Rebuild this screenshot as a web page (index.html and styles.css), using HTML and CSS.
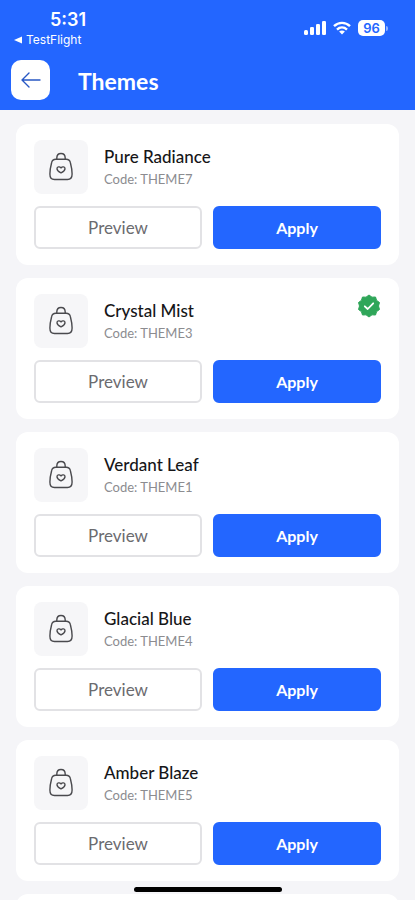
FILE: index.html
```html
<!DOCTYPE html>
<html lang="en">
<head>
<meta charset="utf-8">
<meta name="viewport" content="width=device-width, initial-scale=1">
<title>Themes</title>
<link rel="stylesheet" href="styles.css">
</head>
<body>
<svg class="defs" aria-hidden="true">
  <symbol id="bag" viewBox="0 0 26 30">
    <g fill="none" stroke="#4a4a4e" stroke-width="1.400" stroke-linecap="round" stroke-linejoin="round">
      <path d="M8.800 7.300V6C8.800 3.300 10.600 1.500 13 1.500s4.200 1.800 4.200 4.500v1.300"/>
      <path d="M7.800 7.300h10.400c2.400 0 3.700 1.200 4.200 3.400.9 3.400 1.700 7.400 1.700 11.300 0 4-1.400 5.500-4.600 5.500h-13C3.300 27.500 1.900 26 1.900 22c0-3.900.8-7.900 1.700-11.300.5-2.200 1.800-3.400 4.200-3.400z"/>
      <path d="M13 20.800c-2-.9-4-2.400-4-4.100 0-2.100 2.700-2.500 4-.8 1.300-1.700 4-1.300 4 .8 0 1.700-2 3.200-4 4.100z"/>
    </g>
  </symbol>
</svg>
<div class="app">
  <header class="top">
    <div class="status">
      <div class="status-left">
        <span class="time">5:31</span>
        <a class="return" href="#"><svg width="8" height="8" viewBox="0 0 8 8" aria-hidden="true"><path d="M8 0.500v7L0 4z" fill="#fff"/></svg>TestFlight</a>
      </div>
      <div class="status-right">
        <svg width="22" height="14" viewBox="0 0 22 14" fill="#fff" aria-hidden="true"><rect x="0" y="9" width="4" height="5" rx="1.500"/><rect x="6" y="6" width="4" height="8" rx="1.300"/><rect x="12" y="3" width="4" height="11" rx="1.300"/><rect x="18" y="0" width="4" height="14" rx="1.300"/></svg>
        <svg width="18" height="14" viewBox="0 0 18 14" aria-hidden="true"><g fill="none" stroke="#fff" stroke-width="2.400"><path d="M1 5.200c4.600-4.500 11.400-4.500 16 0"/><path d="M4 8.600c2.900-2.800 7.100-2.800 10 0"/></g><path d="M9 13.500l-2.900-3c1.600-1.500 4.200-1.500 5.800 0z" fill="#fff"/></svg>
        <span class="battery"><span class="level">96</span></span>
      </div>
    </div>
    <div class="bar">
      <button class="back" type="button" aria-label="Back"><svg width="20" height="18" viewBox="0 0 20 18" fill="none" stroke="#2858c4" stroke-width="1.400" stroke-linecap="round" stroke-linejoin="round" aria-hidden="true"><path d="M19 9H1M8 2L1 9l7 7"/></svg></button>
      <h1>Themes</h1>
    </div>
  </header>
  <main class="list">
    <article class="card">
      <div class="info"><span class="thumb"><svg width="26" height="30"><use href="#bag"/></svg></span><div><h2>Pure Radiance</h2><p>Code: THEME7</p></div></div>
      <div class="actions"><button class="btn" type="button">Preview</button><button class="btn primary" type="button">Apply</button></div>
    </article>
    <article class="card">
      <div class="info"><span class="thumb"><svg width="26" height="30"><use href="#bag"/></svg></span><div><h2>Crystal Mist</h2><p>Code: THEME3</p></div>
        <svg class="check" width="24" height="24" viewBox="0 0 24 24" role="img" aria-label="Active theme"><path d="M12 1l3 2.200 3.500-.2 1.100 3.400L22.500 8.500 21.500 12l1 3.500-2.900 2.100L18.500 21l-3.500-.2L12 23l-3-2.200-3.500.2-1.100-3.400-2.900-2.100 1-3.500-1-3.500 2.900-2.100L5.500 3l3.500.2z" fill="#2fa659" stroke="#2fa659" stroke-linejoin="round"/><path d="M7.800 12.300l2.900 2.700 5.500-5.700" fill="none" stroke="#fff" stroke-width="1.800" stroke-linecap="round" stroke-linejoin="round"/></svg></div>
      <div class="actions"><button class="btn" type="button">Preview</button><button class="btn primary" type="button">Apply</button></div>
    </article>
    <article class="card">
      <div class="info"><span class="thumb"><svg width="26" height="30"><use href="#bag"/></svg></span><div><h2>Verdant Leaf</h2><p>Code: THEME1</p></div></div>
      <div class="actions"><button class="btn" type="button">Preview</button><button class="btn primary" type="button">Apply</button></div>
    </article>
    <article class="card">
      <div class="info"><span class="thumb"><svg width="26" height="30"><use href="#bag"/></svg></span><div><h2>Glacial Blue</h2><p>Code: THEME4</p></div></div>
      <div class="actions"><button class="btn" type="button">Preview</button><button class="btn primary" type="button">Apply</button></div>
    </article>
    <article class="card">
      <div class="info"><span class="thumb"><svg width="26" height="30"><use href="#bag"/></svg></span><div><h2>Amber Blaze</h2><p>Code: THEME5</p></div></div>
      <div class="actions"><button class="btn" type="button">Preview</button><button class="btn primary" type="button">Apply</button></div>
    </article>
    <article class="card next"></article>
  </main>
  <div class="home"></div>
</div>
</body>
</html>
```

FILE: styles.css
```css
* { box-sizing: border-box; }
body { margin: 0; background: #f5f5f8; font-family: Lato, sans-serif; color: #161618; }
h1, h2, p { margin: 0; }
button { font: inherit; cursor: pointer; }
.defs { position: absolute; width: 0; height: 0; }
.app { height: 100vh; display: flex; flex-direction: column; }
.top { background: #2366ff; color: #fff; padding: 10px 11px 10px; flex: none; }
.status { display: flex; justify-content: space-between; height: 50px; font-family: Inter, sans-serif; }
.status-left { display: flex; flex-direction: column; padding-left: 3px; }
.time { font-size: 18px; line-height: 20px; font-weight: 600; padding-left: 36px; }
.return { display: flex; align-items: center; gap: 4px; color: #fff; text-decoration: none; font-size: 12px; line-height: 20px; font-weight: 400; }
.status-right { display: flex; align-items: center; align-self: flex-start; gap: 7px; padding: 10px 16px 0 0; }
.battery { display: flex; align-items: center; gap: 1px; }
.battery::after { content: ""; width: 2px; height: 5px; border-radius: 0 2px 2px 0; background: #91b2ff; }
.level { width: 27px; height: 16px; border-radius: 5px; background: #fff; color: #2366ff; font-size: 13px; line-height: 16px; font-weight: 600; text-align: center; }
.bar { display: flex; align-items: center; gap: 28px; }
.back { width: 39px; height: 40px; padding: 0; border: 0; border-radius: 10px; background: #fff; display: grid; place-items: center; }
h1 { font-size: 23px; line-height: 28px; font-weight: 700; padding-top: 2px; }
.list { flex: 1; min-height: 0; overflow: auto; scrollbar-width: none; padding: 14px 16px; display: flex; flex-direction: column; gap: 13px; }
.card { flex: none; background: #fff; border-radius: 12px; padding: 16px 18px; display: flex; flex-direction: column; gap: 12px; }
.next { min-height: 141px; }
.info { display: flex; align-items: center; gap: 16px; }
.thumb { width: 54px; height: 54px; border-radius: 8px; background: #f6f6f8; display: grid; place-items: center; }
h2 { font-size: 17px; line-height: 24px; font-weight: 500; }
p { font-size: 13px; line-height: 20px; color: #8c8c90; }
.check { align-self: flex-start; margin-left: auto; }
.actions { display: grid; grid-template-columns: 1fr 1fr; gap: 11px; }
.btn { height: 43px; padding: 0; border: 2px solid #e2e2e5; border-radius: 6px; background: #fff; color: #6b6b6f; font-size: 17px; }
.primary { border-color: #2366ff; background: #2366ff; color: #fff; font-weight: 700; font-size: 16px; }
.home { position: fixed; left: 50%; bottom: 8px; width: 148px; height: 5px; margin-left: -74px; border-radius: 3px; background: #000; }
```
